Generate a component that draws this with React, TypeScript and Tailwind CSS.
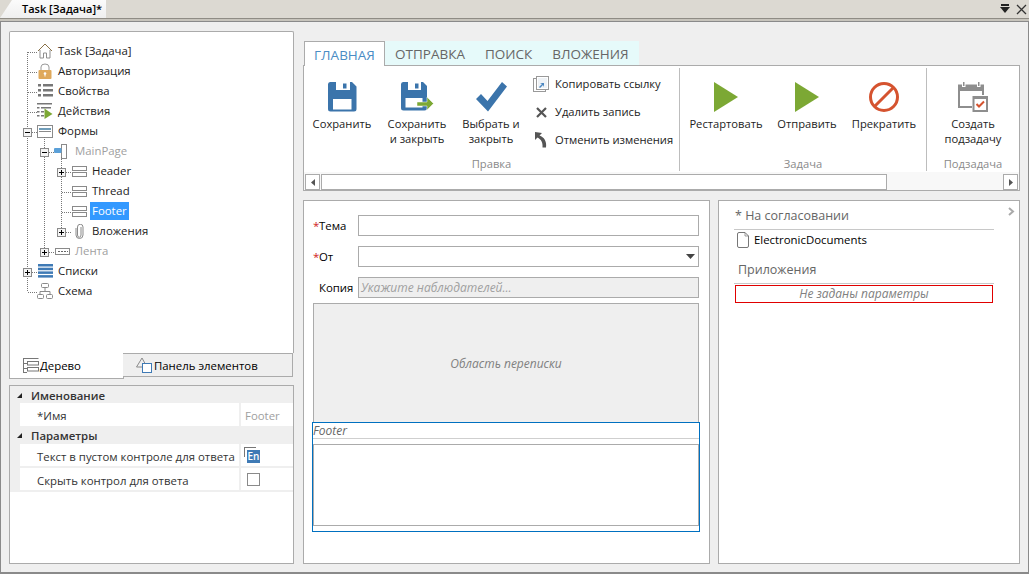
import React from "react";

const F = "font-['Open_Sans',sans-serif]";

function Floppy() {
  return (
    <svg width="29" height="30" viewBox="0 0 29 30">
      <path d="M2 0H24L28.500 4.500V27a2.500 2.500 0 0 1-2.500 2.500H2.500A2.500 2.500 0 0 1 0 27V2.500A2.500 2.500 0 0 1 2 0Z" fill="#3b74ab" />
      <rect x="8" y="0" width="14" height="8" fill="#fff" />
      <rect x="15" y="1.500" width="3.500" height="5" fill="#3b74ab" />
      <rect x="5" y="17" width="18.500" height="10.500" fill="#fff" />
    </svg>
  );
}
function FloppyArrow() {
  return (
    <svg width="33" height="30" viewBox="0 0 33 30">
      <path d="M2 0H22L26 4V26a2.500 2.500 0 0 1-2.500 2.500H2.500A2.500 2.500 0 0 1 0 26V2.500A2.500 2.500 0 0 1 2 0Z" fill="#3b74ab" />
      <rect x="7" y="0" width="13" height="8" fill="#fff" />
      <rect x="14" y="1.500" width="3.500" height="5" fill="#3b74ab" />
      <rect x="4.500" y="16" width="17" height="9.500" fill="#fff" />
      <path d="M16 20h10v-5l6.500 6.500L26 28v-4H16Z" fill="#7ca834" stroke="#fff" strokeWidth="0.500" />
    </svg>
  );
}
function Check() {
  return (
    <svg width="31" height="30" viewBox="0 0 31 30">
      <path d="M0 17l5-5 6.500 7L26 0l5 4.500L12 29.500Z" fill="#3b74ab" />
    </svg>
  );
}
function Play() {
  return (
    <svg width="24" height="30" viewBox="0 0 24 30">
      <path d="M0 0L24 15L0 30Z" fill="#7ca834" />
    </svg>
  );
}
function Ban() {
  return (
    <svg width="30" height="30" viewBox="0 0 30 30">
      <circle cx="15" cy="15" r="13.500" fill="none" stroke="#d5532f" strokeWidth="3" />
      <path d="M5.500 24.500L24.500 5.500" stroke="#d5532f" strokeWidth="3" />
    </svg>
  );
}
function CalendarTask() {
  return (
    <svg width="30" height="30" viewBox="0 0 30 30">
      <path d="M0 2.500H26V9H0Z" fill="#8e8e8e" />
      <path d="M1 9V25H14M25 9V13" fill="none" stroke="#8e8e8e" strokeWidth="2" />
      <rect x="4" y="0" width="3.500" height="5" fill="#fff" />
      <rect x="5" y="0" width="1.500" height="4" fill="#8e8e8e" />
      <rect x="19" y="0" width="3.500" height="5" fill="#fff" />
      <rect x="20" y="0" width="1.500" height="4" fill="#8e8e8e" />
      <rect x="15.500" y="15" width="13.500" height="14" fill="#fff" stroke="#8e8e8e" strokeWidth="2" />
      <rect x="15" y="14" width="14" height="3" fill="#8e8e8e" />
      <path d="M18.500 22l2.500 2.500 5-5" fill="none" stroke="#d5532f" strokeWidth="2" />
    </svg>
  );
}
function CopyLink() {
  return (
    <svg width="16" height="16" viewBox="0 0 16 16">
      <rect x="0.500" y="2.500" width="12" height="13" fill="#fff" stroke="#999" />
      <rect x="3.500" y="0.500" width="12" height="13" fill="#fff" stroke="#999" />
      <rect x="5" y="2" width="9" height="10" fill="#eef2f6" />
      <path d="M6 11l3-3-2-1h4v4l-1-2-3 3Z" fill="#4a86c0" />
    </svg>
  );
}
function XIcon() {
  return (
    <svg width="11" height="11" viewBox="0 0 11 11">
      <path d="M1 1L10 10M10 1L1 10" stroke="#555" strokeWidth="2.200" />
    </svg>
  );
}
function UndoIcon() {
  return (
    <svg width="14" height="16" viewBox="0 0 14 16">
      <path d="M1 0V8L3.500 5.500C7 7.500 9 10 8.500 15.500H12C13 9.500 10 5 5.500 3.500L8 1Z" fill="#555" />
    </svg>
  );
}

function House() {
  return (
    <svg width="16" height="16" viewBox="0 0 16 16">
      <path d="M1 8L8 1L15 8" fill="none" stroke="#8a7146" />
      <path d="M3 7V15H6.500V10H9.500V15H13V7" fill="none" stroke="#8f8f8f" />
    </svg>
  );
}
function Lock() {
  return (
    <svg width="14" height="16" viewBox="0 0 14 16">
      <path d="M3 7V4a4 3 0 0 1 8 0V7" fill="none" stroke="#999" />
      <rect x="0.500" y="7" width="13" height="9" rx="1" fill="#dfa95c" />
      <circle cx="7" cy="10.500" r="1.300" fill="#fff" />
      <rect x="6.500" y="10.500" width="1" height="3" fill="#fff" />
    </svg>
  );
}
function ListIcon() {
  return (
    <svg width="15" height="14" viewBox="0 0 15 14">
      {[0, 5, 10].map((y) => (
        <g key={y} fill="#777">
          <rect x="0" y={y} width="3" height="2.500" />
          <rect x="5" y={y} width="10" height="2.500" />
        </g>
      ))}
    </svg>
  );
}
function ActionIcon() {
  return (
    <svg width="16" height="16" viewBox="0 0 16 16">
      <g fill="#777">
        <rect x="0" y="0" width="15" height="1.500" />
        <rect x="0" y="4" width="2.500" height="1.500" />
        <rect x="4" y="4" width="10" height="1.500" />
        <rect x="0" y="8" width="2.500" height="1.500" />
        <rect x="4" y="8" width="3" height="1.500" />
        <rect x="0" y="12" width="2.500" height="1.500" />
        <rect x="4" y="12" width="3" height="1.500" />
      </g>
      <path d="M7.500 5.500L15.500 11L7.500 16Z" fill="#7ca834" />
    </svg>
  );
}
function FormIcon() {
  return (
    <svg width="16" height="13" viewBox="0 0 16 13">
      <rect x="0.500" y="0.500" width="15" height="12" fill="#fff" stroke="#8a8a8a" />
      <rect x="2" y="3" width="12" height="2" fill="#6f9cb8" />
      <rect x="2" y="6" width="12" height="1" fill="#8a8a8a" />
    </svg>
  );
}
function PageIcon() {
  return (
    <svg width="13" height="15" viewBox="0 0 13 15">
      <rect x="7.500" y="0.500" width="5" height="14" fill="#fff" stroke="#8a8a8a" />
      <rect x="0" y="4" width="7.500" height="5" rx="1" fill="#5ba0d8" />
    </svg>
  );
}
function SectionIcon() {
  return (
    <svg width="15" height="11" viewBox="0 0 15 11">
      <rect x="0.500" y="0.500" width="14" height="4" fill="#fff" stroke="#8a8a8a" />
      <rect x="0.500" y="6.500" width="14" height="4" fill="#fff" stroke="#8a8a8a" />
    </svg>
  );
}
function Clip() {
  return (
    <svg width="9" height="15" viewBox="0 0 9 15">
      <path d="M6 3V11a1.700 2.200 0 0 1-3.500 0V3a2.500 2.500 0 0 1 5.500 0V11a3.500 3.500 0 0 1-7 0V4" fill="none" stroke="#8a8a8a" />
    </svg>
  );
}
function RibbonIcon() {
  return (
    <svg width="15" height="7" viewBox="0 0 15 7">
      <rect x="0.500" y="0.500" width="14" height="6" fill="#fff" stroke="#8a8a8a" />
      <path d="M3 3.500H5M6 3.500H8M9 3.500H11M12 3.500H13" stroke="#666" />
    </svg>
  );
}
function Lines() {
  return (
    <svg width="15" height="14" viewBox="0 0 15 14">
      <rect x="0" y="0" width="15" height="2.500" fill="#3f7ab5" />
      <rect x="0" y="3.700" width="15" height="2.500" fill="#3f7ab5" />
      <rect x="0" y="7.400" width="15" height="2.500" fill="#3f7ab5" />
      <rect x="0" y="11.100" width="15" height="2.500" fill="#3f7ab5" />
    </svg>
  );
}
function Schema() {
  return (
    <svg width="16" height="16" viewBox="0 0 16 16" fill="none" stroke="#8a8a8a">
      <rect x="4.500" y="0.500" width="7" height="4" rx="1" />
      <rect x="0.500" y="11.500" width="6" height="4" rx="1" />
      <rect x="9.500" y="11.500" width="6" height="4" rx="1" />
      <path d="M8 5V8.500M3 11V8.500H13V11" />
    </svg>
  );
}
function TreeTabIcon() {
  return (
    <svg width="16" height="15" viewBox="0 0 16 15" fill="none" stroke="#777">
      <path d="M0.500 0V15" />
      <path d="M0 0.500H6M0 5.500H4M0 10.500H4M0 14.500H4" />
      <rect x="4.500" y="3.500" width="11" height="3.500" />
      <rect x="4.500" y="9.500" width="11" height="3.500" />
      <path d="M5 0.500H15.500" />
    </svg>
  );
}
function ShapesIcon() {
  return (
    <svg width="16" height="16" viewBox="0 0 16 16" fill="none">
      <path d="M0.500 10L6 1L11 10" stroke="#8a8a8a" />
      <path d="M0.500 10H7" stroke="#8a8a8a" />
      <rect x="6.500" y="6.500" width="9" height="9" fill="#fff" stroke="#3f7ab5" />
    </svg>
  );
}
function Doc() {
  return (
    <svg width="12" height="16" viewBox="0 0 12 16">
      <path d="M0.500 2A1.500 1.500 0 0 1 2 0.500H8L11.500 4V14A1.500 1.500 0 0 1 10 15.500H2A1.500 1.500 0 0 1 0.500 14Z" fill="#fff" stroke="#777" />
      <path d="M8 0.500V4H11.500" fill="none" stroke="#777" strokeWidth="0.700" />
    </svg>
  );
}

const rows = [
  { pl: 27, icon: <House />, w: 16, text: "Task [Задача]", gap: 5 },
  { pl: 27, icon: <Lock />, w: 16, text: "Авторизация", gap: 5 },
  { pl: 27, icon: <ListIcon />, w: 16, text: "Свойства", gap: 5 },
  { pl: 27, icon: <ActionIcon />, w: 16, text: "Действия", gap: 5 },
  { pl: 27, icon: <FormIcon />, w: 16, text: "Формы", gap: 5 },
  { pl: 44, icon: <PageIcon />, w: 13, text: "MainPage", gap: 8, muted: true },
  { pl: 61, icon: <SectionIcon />, w: 16, text: "Header", gap: 5 },
  { pl: 61, icon: <SectionIcon />, w: 16, text: "Thread", gap: 5 },
  { pl: 61, icon: <SectionIcon />, w: 16, text: "Footer", gap: 5, selected: true },
  { pl: 61, icon: <Clip />, w: 16, text: "Вложения", gap: 5 },
  { pl: 44, icon: <RibbonIcon />, w: 16, text: "Лента", gap: 5, muted: true },
  { pl: 27, icon: <Lines />, w: 16, text: "Списки", gap: 5 },
  { pl: 27, icon: <Schema />, w: 16, text: "Схема", gap: 5 },
];

function Expander({ x, y, plus }: { x: number; y: number; plus: boolean }) {
  return (
    <g>
      <rect x={x - 3.5} y={y - 4.5} width="8" height="8" fill="#f4f4f4" stroke="#8a8a8a" />
      <path d={plus ? `M${x - 2} ${y - 0.5}H${x + 3}M${x + 0.5} ${y - 3}V${y + 2}` : `M${x - 2} ${y - 0.5}H${x + 3}`} stroke="#000" />
    </g>
  );
}

function TreeLines() {
  const d = "#777";
  const dash = "1 1";
  return (
    <svg className="absolute left-0 top-0 pointer-events-none" width="100" height="290">
      <g stroke={d} strokeDasharray={dash} fill="none">
        <path d="M17.500 20V260" />
        <path d="M18 20.500H27M18 40.500H27M18 60.500H27M18 80.500H27M18 100.500H27M18 240.500H27M18 260.500H27" />
        <path d="M34.500 105V220" />
        <path d="M35 120.500H45M35 220.500H45" />
        <path d="M51.500 125V200" />
        <path d="M52 140.500H61M52 160.500H61M52 180.500H61M52 200.500H61" />
      </g>
      <Expander x={17} y={101} plus={false} />
      <Expander x={34} y={121} plus={false} />
      <Expander x={51} y={141} plus={true} />
      <Expander x={51} y={201} plus={true} />
      <Expander x={34} y={221} plus={true} />
      <Expander x={17} y={241} plus={true} />
    </svg>
  );
}

function Big({ w, icon, label }: { w: string; icon: React.ReactNode; label: React.ReactNode }) {
  return (
    <div className={`${w} flex flex-col items-center pt-4 shrink-0`}>
      <div className="h-[30px] flex items-start">{icon}</div>
      <div className="mt-[4px] text-center leading-[15px] text-[#222]">{label}</div>
    </div>
  );
}
function Small({ icon, label }: { icon: React.ReactNode; label: string }) {
  return (
    <div className="h-7 flex items-center">
      <div className="w-4 flex justify-center">{icon}</div>
      <span className="ml-[6px] whitespace-nowrap text-[#222]">{label}</span>
    </div>
  );
}
function Group({ label, w, children }: { label: string; w: string; children: React.ReactNode }) {
  return (
    <div className={`${w} relative flex flex-col h-[106px] shrink-0`}>
      <div className="flex flex-1">{children}</div>
      <div className="text-center text-[#8a8a8a] leading-[15px] pb-[1px]">{label}</div>
    </div>
  );
}
function Sep() {
  return <div className="w-px h-[103px] mt-[2px] bg-[#bdbdbd] shrink-0" />;
}

export default function App() {
  return (
    <div className={`${F} w-[1029px] h-[574px] flex flex-col bg-[#efefef] text-[11.4px] text-[#222] overflow-hidden`}>
      <div className="h-[18px] bg-[#dcd9d2] flex items-end justify-between shrink-0">
        <div className="relative w-[106px] h-[18px] flex items-center pl-[22px] bg-gradient-to-b from-[#fbfbfb] to-[#efefef] [clip-path:polygon(0_100%,12px_0,100%_0,100%_100%)]">
          <span className="font-semibold text-black whitespace-nowrap text-[11px]">Task [Задача]*</span>
        </div>
        <div className="flex items-center gap-[6px] pr-[1px] h-[18px]">
          <svg width="10" height="10" viewBox="0 0 10 10">
            <rect x="1" y="0" width="8" height="2" fill="#222" />
            <path d="M0 3H10L5 9Z" fill="#222" />
          </svg>
          <svg width="11" height="11" viewBox="0 0 11 11" className="mr-[1px]">
            <path d="M1 1L10 10M10 1L1 10" stroke="#333" strokeWidth="1.300" />
          </svg>
        </div>
      </div>
      <div className="h-px bg-[#8f8c85] shrink-0" />
      <div className="h-[2px] bg-[#c7c4bc] shrink-0" />

      <div className="flex-1 flex border-t border-x border-b-2 border-[#8a8a8a] pl-2 pt-[9px] pb-2 min-h-0">
        {/* left column */}
        <div className="w-[285px] flex flex-col shrink-0">
          <div className="relative h-[323px] bg-white border-t border-x border-[#ababab] rounded-t-[2px] pt-[9px]">
            <TreeLines />
            {rows.map((r) => (
              <div key={r.text} className="h-5 flex items-center" style={{ paddingLeft: r.pl }}>
                <div className="flex justify-center items-center shrink-0" style={{ width: r.w }}>
                  {r.icon}
                </div>
                <span
                  style={{ marginLeft: r.selected ? r.gap - 2 : r.gap }}
                  className={
                    r.selected
                      ? "bg-[#3399ff] text-white px-[2px] h-[18px] leading-[18px]"
                      : r.muted
                        ? "text-[#a0a0a0]"
                        : "text-[#222]"
                  }
                >
                  {r.text}
                </span>
              </div>
            ))}
          </div>
          <div className="h-[26px] flex items-start">
            <div className="w-[115px] h-[26px] bg-white border-x border-b border-[#ababab] flex items-center pl-[13px]">
              <TreeTabIcon />
              <span className="ml-[1px] text-black">Дерево</span>
            </div>
            <div className="w-[170px] h-[24px] -ml-px bg-[#efefef] border-y border-r border-[#ababab] flex items-center pl-[13px]">
              <ShapesIcon />
              <span className="ml-[2px] text-black">Панель элементов</span>
            </div>
          </div>
          <div className="mt-[6px] h-[179px] bg-white border border-[#ababab] text-[#333]">
            <PropHead label="Именование" h="h-[17px]" />
            <div className="h-[23px] flex">
              <div className="w-[10px] bg-[#efefef]" />
              <div className="w-[219px] pl-[17px] pt-px flex items-center">*Имя</div>
              <div className="w-[2px] bg-[#efefef]" />
              <div className="flex-1 pl-[4px] pt-px flex items-center text-[#a0a0a0]">Footer</div>
            </div>
            <PropHead label="Параметры" h="h-[18px]" />
            <div className="h-[24px] flex border-b-2 border-[#efefef]">
              <div className="w-[10px] bg-[#efefef]" />
              <div className="w-[219px] pl-[17px] pt-[2px] flex items-center whitespace-nowrap">Текст в пустом контроле для ответа</div>
              <div className="w-[2px] bg-[#efefef]" />
              <div className="flex-1 pl-[3px] flex items-center relative">
                <div className="w-[12px] h-[10px] border-l border-t border-[#777] absolute left-[3px] top-[3px]" />
                <div className="relative ml-[3px] mt-[3px] w-[13px] h-[13px] bg-[#3f7ab5] text-white text-[10px] leading-[13px] text-center font-semibold">En</div>
              </div>
            </div>
            <div className="h-[24px] flex border-b-2 border-[#efefef]">
              <div className="w-[10px] bg-[#efefef]" />
              <div className="w-[219px] pl-[17px] pt-[2px] flex items-center whitespace-nowrap">Скрыть контрол для ответа</div>
              <div className="w-[2px] bg-[#efefef]" />
              <div className="flex-1 pl-[6px] flex items-center">
                <div className="w-[13px] h-[13px] border border-[#8a8a8a] bg-white" />
              </div>
            </div>
          </div>
        </div>

        {/* center / right */}
        <div className="ml-[9px] w-[717px] flex flex-col shrink-0 pt-[10px]">
          <div className="h-[25px] flex pl-px relative z-10 text-[13.5px]">
            <div className="w-[81px] h-[25px] bg-white border-x border-t border-[#ababab] flex items-center justify-center pt-[3px] text-[#4a8cc4]">ГЛАВНАЯ</div>
            <div className="h-[24px] flex items-center bg-[#e6fafa] text-[#666] w-[254px] pl-[10px] pt-[3px]">
              <span>ОТПРАВКА</span>
              <span className="ml-[20px]">ПОИСК</span>
              <span className="ml-[20px]">ВЛОЖЕНИЯ</span>
            </div>
          </div>
          <div className="h-[126px] -mt-px bg-white border border-[#ababab] flex flex-col text-[11.2px]">
            <div className="flex h-[106px]">
              <Group label="Правка" w="w-[375px]">
                <Big w="w-[76px]" icon={<Floppy />} label="Сохранить" />
                <Big w="w-[74px]" icon={<FloppyArrow />} label={<>Сохранить<br />и закрыть</>} />
                <Big w="w-[74px]" icon={<Check />} label={<>Выбрать и<br />закрыть</>} />
                <div className="pl-[5px] pt-1">
                  <Small icon={<CopyLink />} label="Копировать ссылку" />
                  <Small icon={<XIcon />} label="Удалить запись" />
                  <Small icon={<UndoIcon />} label="Отменить изменения" />
                </div>
              </Group>
              <Sep />
              <Group label="Задача" w="w-[246px]">
                <Big w="w-[92px]" icon={<Play />} label="Рестартовать" />
                <Big w="w-[70px]" icon={<Play />} label="Отправить" />
                <Big w="w-[84px]" icon={<Ban />} label="Прекратить" />
              </Group>
              <Sep />
              <Group label="Подзадача" w="w-[92px]">
                <Big w="w-full" icon={<CalendarTask />} label={<>Создать<br />подзадачу</>} />
              </Group>
            </div>
            <div className="h-[18px] flex items-start bg-[#f8f8f8] pl-px pr-px pt-[2px]">
              <div className="w-[15px] h-[16px] bg-white border border-[#ababab] flex items-center justify-center">
                <svg width="4" height="7" viewBox="0 0 4 7"><path d="M4 0V7L0 3.500Z" fill="#555" /></svg>
              </div>
              <div className="ml-px w-[566px] h-[16px] bg-white border border-[#ababab]" />
              <div className="flex-1" />
              <div className="w-[15px] h-[16px] bg-white border border-[#ababab] flex items-center justify-center">
                <svg width="4" height="7" viewBox="0 0 4 7"><path d="M0 0V7L4 3.500Z" fill="#555" /></svg>
              </div>
            </div>
          </div>

          <div className="mt-[9px] flex-1 flex gap-[8px] min-h-0">
            {/* form */}
            <div className="w-[407px] bg-white border border-[#ababab] pl-[9px] pr-[10px] pt-[14px] flex flex-col">
              <FormRow label="Тема" required>
                <div className="flex-1 h-[21px] border border-[#ababab] bg-white" />
              </FormRow>
              <div className="h-[10px]" />
              <FormRow label="От" required>
                <div className="flex-1 h-[21px] border border-[#ababab] bg-white flex items-center justify-end pr-[3px]">
                  <svg width="9" height="5" viewBox="0 0 9 5"><path d="M0 0H9L4.500 5Z" fill="#444" /></svg>
                </div>
              </FormRow>
              <div className="h-[10px]" />
              <FormRow label="Копия">
                <div className="flex-1 h-[21px] border border-[#ababab] bg-[#efefef] flex items-center pl-[2px] italic text-[12px] text-[#a0a0a0]">
                  Укажите наблюдателей...
                </div>
              </FormRow>
              <div className="mt-[5px] h-[120px] border-x border-t border-[#ababab] bg-[#efefef] flex items-center justify-center italic text-[12px] text-[#808080]">
                Область переписки
              </div>
              <div className="-mx-px -mt-px h-[110px] border border-[#0070c0] flex flex-col bg-white relative">
                <div className="h-[16px] border-b border-[#cfcfcf] italic text-[12px] text-[#666] leading-[15px]">Footer</div>
                <div className="mt-[5px] h-[82px] border border-[#ababab] mx-0" />
              </div>
            </div>
            {/* right */}
            <div className="flex-1 bg-white border border-[#ababab] relative pl-[15px] pt-[6px]">
              <svg className="absolute right-[4px] top-[6px]" width="7" height="9" viewBox="0 0 7 9">
                <path d="M1 1L5 4.500L1 8" fill="none" stroke="#aaa" strokeWidth="2" />
              </svg>
              <div className="w-[260px]">
                <div className="h-[23px] border-b border-[#c8c8c8] text-[12.5px] text-[#666] pl-px leading-[18px]">* На согласовании</div>
                <div className="h-[20px] flex items-center pl-[3px] text-black">
                  <Doc />
                  <span className="ml-[5px]">ElectronicDocuments</span>
                </div>
                <div className="mt-[10px] h-[24px] border-b border-[#c8c8c8] text-[12.5px] text-[#666] pl-[4px] leading-[20px]">Приложения</div>
                <div className="mt-px h-[18px] ml-px mr-px border border-[#e00000] flex items-center justify-center italic text-[12px] text-[#808080]">Не заданы параметры</div>
              </div>
            </div>
          </div>
        </div>
      </div>
    </div>
  );
}

function PropHead({ label, h }: { label: string; h: string }) {
  return (
    <div className={`${h} bg-[#efefef] flex items-center font-semibold text-[#333] pt-px`}>
      <svg className="ml-[7px]" width="5" height="5" viewBox="0 0 5 5"><path d="M5 0V5H0Z" fill="#222" /></svg>
      <span className="ml-[9px]">{label}</span>
    </div>
  );
}

function FormRow({ label, required, children }: { label: string; required?: boolean; children: React.ReactNode }) {
  return (
    <div className="flex items-center">
      <div className="w-[45px] shrink-0 flex text-black">
        <span className="w-[6px] text-[#d02020]">{required ? "*" : ""}</span>
        <span>{label}</span>
      </div>
      {children}
    </div>
  );
}
